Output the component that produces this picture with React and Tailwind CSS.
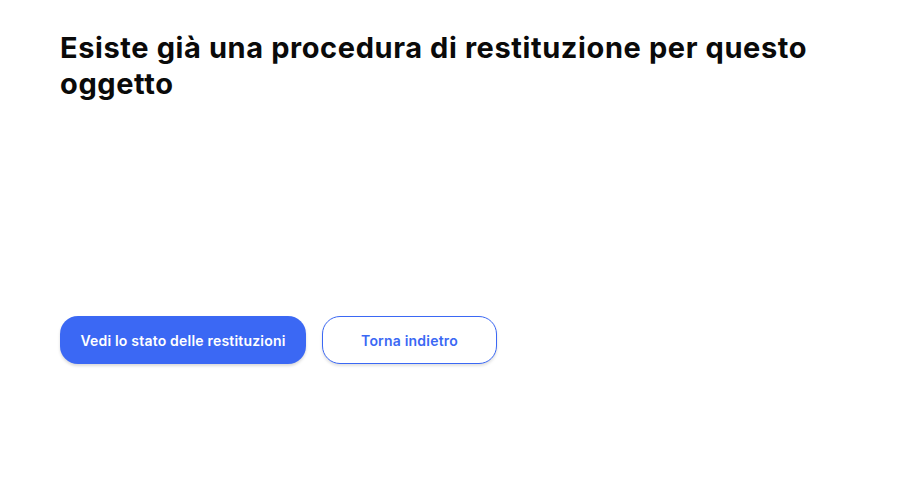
import React from 'react';

const App = () => {
    return (
        <div className="min-h-[482px] w-[920px] bg-white px-[60px] pt-[30px]" style={{ fontFamily: 'Inter, "Liberation Sans", sans-serif' }}>
            <h1 className="max-w-[790px] text-[29px] font-bold leading-[36px] tracking-[0.6px] text-[#0a0a0a]">
                Esiste già una procedura di restituzione per questo oggetto
            </h1>
            <div className="mt-[214px] flex gap-4">
                <button className="h-12 w-[246px] rounded-[18px] bg-[#3b68f4] text-[14px] font-semibold tracking-[0.2px] text-white shadow-[0_2px_3px_rgba(0,0,0,0.15)]">
                    Vedi lo stato delle restituzioni
                </button>
                <button className="h-12 w-[175px] rounded-[18px] border border-[#3b68f4] bg-white text-[14px] font-semibold tracking-[0.2px] text-[#3b68f4] shadow-[0_2px_3px_rgba(0,0,0,0.12)]">
                    Torna indietro
                </button>
            </div>
        </div>
    );
};

export default App;
